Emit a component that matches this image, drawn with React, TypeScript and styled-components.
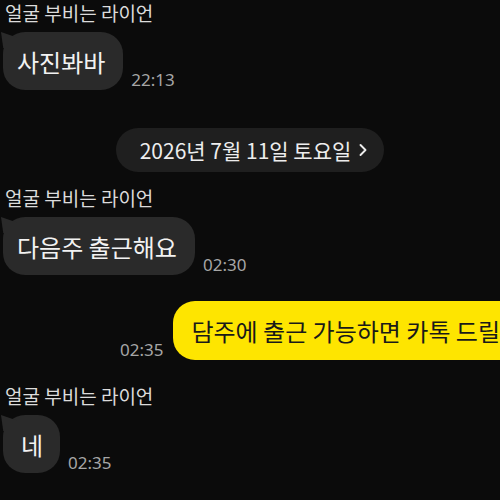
import styled, { createGlobalStyle } from "styled-components"
import { ChevronRight } from "lucide-react"

const GlobalStyle = createGlobalStyle`
  html, body {
    margin: 0;
    padding: 0;
    background: #0b0b0b;
    overflow: hidden;
  }
  body {
    font-family: "Noto Sans CJK KR", "Noto Sans", sans-serif;
    color: #ececec;
  }
`

type Msg = { text: string; time: string }

const App = () => {
  return (
    <>
      <GlobalStyle />
      <Chat>
        <Incoming name="얼굴 부비는 라이언" msg={{ text: "사진봐바", time: "22:13" }} />

        <DateRow>
          <DatePill>
            2026년 7월 11일 토요일
            <ChevronRight size={20} strokeWidth={2.3} />
          </DatePill>
        </DateRow>

        <Group $top={15}>
          <Name>얼굴 부비는 라이언</Name>
          <Row>
            <Bubble>다음주 출근해요</Bubble>
            <Time>02:30</Time>
          </Row>
        </Group>

        <MineRow>
          <Time>02:35</Time>
          <MyBubble>담주에 출근 가능하면 카톡 드릴게요</MyBubble>
        </MineRow>

        <Group $top={25}>
          <Name>얼굴 부비는 라이언</Name>
          <Row>
            <Bubble $narrow>네</Bubble>
            <Time>02:35</Time>
          </Row>
        </Group>
      </Chat>
    </>
  )
}

const Incoming = ({ name, msg }: { name: string; msg: Msg }) => (
  <Group $top={0}>
    <Name>{name}</Name>
    <Row>
      <Bubble>{msg.text}</Bubble>
      <Time>{msg.time}</Time>
    </Row>
  </Group>
)

export default App

const Chat = styled.div`
  width: 500px;
  height: 500px;
  padding: 2px 0 0 3px;
  box-sizing: border-box;
  display: flex;
  flex-direction: column;
  overflow: hidden;
`

const Group = styled.div<{ $top: number }>`
  display: flex;
  flex-direction: column;
  gap: 8px;
  margin-top: ${(p) => p.$top}px;
`

const Name = styled.div`
  font-size: 19px;
  line-height: 22px;
  padding-left: 2px;
  color: #dcdcdc;
`

const Row = styled.div`
  display: flex;
  align-items: flex-end;
  gap: 8px;
`

const Bubble = styled.div<{ $narrow?: boolean }>`
  position: relative;
  height: 58px;
  display: flex;
  align-items: center;
  padding: ${(p) => (p.$narrow ? "0 17px 0 18px" : "0 18px 0 14px")};
  background: #2a2a2a;
  border-radius: 22px;
  font-size: 24px;
  color: #f2f2f2;
  white-space: nowrap;

  /* little tail on the top-left corner */
  &::before {
    content: "";
    position: absolute;
    left: -2px;
    top: 0;
    width: 16px;
    height: 16px;
    background: #2a2a2a;
    clip-path: polygon(0 0, 100% 35%, 100% 100%, 14% 100%);
  }
`

const Time = styled.span`
  font-family: "Noto Sans", sans-serif;
  font-size: 17px;
  line-height: 17px;
  margin-bottom: 2px;
  color: #a6a6a6;
  white-space: nowrap;
`

const DateRow = styled.div`
  display: flex;
  justify-content: center;
  margin-top: 38px;
  margin-left: -3px;
`

const DatePill = styled.div`
  height: 44px;
  display: flex;
  align-items: center;
  gap: 2px;
  padding: 0 11px 0 24px;
  background: #1f1f1f;
  border-radius: 22px;
  font-size: 21px;
  color: #ededed;
  white-space: nowrap;
`

const MineRow = styled.div`
  display: flex;
  align-items: flex-end;
  gap: 10px;
  margin-top: 26px;
  padding-left: 117px;
`

const MyBubble = styled.div`
  height: 59px;
  display: flex;
  align-items: center;
  flex-shrink: 0;
  padding: 0 18px;
  background: #fee500;
  border-radius: 22px;
  font-size: 24px;
  color: #191919;
  white-space: nowrap;
`
